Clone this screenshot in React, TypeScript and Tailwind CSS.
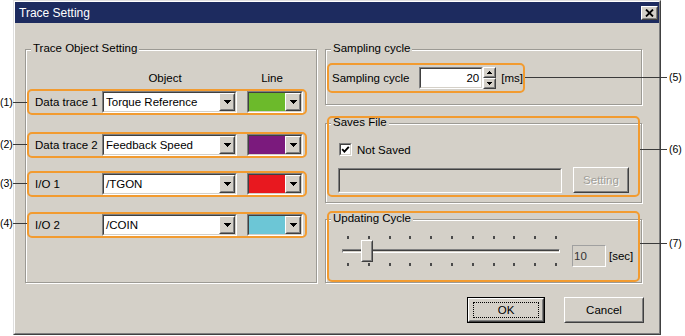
import React from "react";

type P = { className?: string; children?: React.ReactNode };

function Raised({ className = "", children }: P) {
  return (
    <div className={`border border-t-white border-l-white border-b-[#404040] border-r-[#404040] ${className}`}>
      <div className="flex h-full w-full items-center justify-center border border-t-[#d4d0c8] border-l-[#d4d0c8] border-b-[#808080] border-r-[#808080] bg-[#d4d0c8]">
        {children}
      </div>
    </div>
  );
}

function Sunken({ className = "", inner = "", children }: P & { inner?: string }) {
  return (
    <div className={`border border-t-[#808080] border-l-[#808080] border-b-white border-r-white ${className}`}>
      <div className={`h-full w-full border border-t-[#404040] border-l-[#404040] border-b-[#d4d0c8] border-r-[#d4d0c8] ${inner}`}>
        {children}
      </div>
    </div>
  );
}

function DownArrow() {
  return (
    <svg width="7" height="4" viewBox="0 0 7 4" shapeRendering="crispEdges">
      <path d="M0 0h7v1H0zM1 1h5v1H1zM2 2h3v1H2zM3 3h1v1H3z" fill="#000" />
    </svg>
  );
}

function UpSmall() {
  return (
    <svg width="5" height="3" viewBox="0 0 5 3" shapeRendering="crispEdges">
      <path d="M2 0h1v1H2zM1 1h3v1H1zM0 2h5v1H0z" fill="#000" />
    </svg>
  );
}
function DownSmall() {
  return (
    <svg width="5" height="3" viewBox="0 0 5 3" shapeRendering="crispEdges">
      <path d="M0 0h5v1H0zM1 1h3v1H1zM2 2h1v1H2z" fill="#000" />
    </svg>
  );
}

function Combo({ text }: { text: string }) {
  return (
    <Sunken className="h-[22px] w-[135px]" inner="flex bg-white">
      <span className="flex-1 pl-[2px] leading-[18px] text-black">{text}</span>
      <Raised className="h-[18px] w-[16px]">
        <DownArrow />
      </Raised>
    </Sunken>
  );
}

function ColorCombo({ color }: { color: string }) {
  return (
    <Sunken className="ml-[10px] h-[22px] w-[56px]" inner="flex bg-white">
      <div className="flex-1" style={{ backgroundColor: color }} />
      <Raised className="h-[18px] w-[16px]">
        <DownArrow />
      </Raised>
    </Sunken>
  );
}

function Group({ title, className = "", children }: P & { title: string }) {
  return (
    <div
      className={`relative border border-[#9c9a94] shadow-[inset_1px_1px_0_#fff,1px_1px_0_#fff] ${className}`}
    >
      <span className="absolute -top-[8px] left-[5px] bg-[#d4d0c8] px-[2px] leading-[13px]">{title}</span>
      {children}
    </div>
  );
}

function TraceRow({ label, value, color, className = "" }: { label: string; value: string; color: string; className?: string }) {
  return (
    <div className={`flex h-[26px] w-[280px] items-center rounded-[5px] border-2 border-[#f29b30] pl-[6px] ${className}`}>
      <span className="w-[67px] leading-[14px]">{label}</span>
      <Combo text={value} />
      <ColorCombo color={color} />
    </div>
  );
}

function Ticks() {
  return (
    <div className="flex h-[3px] justify-between pl-[5px] pr-[3px]">
      {Array.from({ length: 11 }).map((_, i) => (
        <div key={i} className="h-[3px] w-[2px] bg-[#4a4a4a]" />
      ))}
    </div>
  );
}

function Callout({ label, top, lineLeft, lineWidth, textLeft }: { label: string; top: number; lineLeft: number; lineWidth: number; textLeft: number }) {
  return (
    <>
      <div className="absolute h-[1px] bg-[#3a3a3a]" style={{ top, left: lineLeft, width: lineWidth }} />
      <span className="absolute text-[10.5px] leading-[14px] text-black" style={{ top: top - 7, left: textLeft }}>
        {label}
      </span>
    </>
  );
}

export default function App() {
  return (
    <div className="relative h-[336px] w-[685px] overflow-hidden bg-white text-[11.5px] text-black [font-family:'Liberation_Sans',Arial,sans-serif]">
      {/* window */}
      <div className="ml-[13px] h-[335px] w-[648px] border border-t-[#dfdfdf] border-l-[#dfdfdf] border-b-[#404040] border-r-[#404040]">
        <div className="h-full w-full border border-t-white border-l-white border-b-[#808080] border-r-[#808080] bg-[#d4d0c8]">
          {/* title bar */}
          <div className="flex h-[21px] items-center justify-between bg-[#1d2b5f] pl-[4px] pr-[1px]">
            <span className="text-[12px] leading-[14px] text-white">Trace Setting</span>
            <Raised className="h-[14px] w-[17px]">
              <svg width="9" height="8" viewBox="0 0 9 8">
                <path d="M1 0.5L8 7.5M8 0.5L1 7.5" stroke="#000" strokeWidth="1.8" />
              </svg>
            </Raised>
          </div>

          {/* body */}
          <div className="flex flex-col pl-[10px] pt-[26px]">
            <div className="flex gap-[8px]">
              {/* left group */}
              <Group title="Trace Object Setting" className="h-[234px] w-[292px] pl-[1px] pt-[21px]">
                <div className="flex h-[14px] leading-[14px]">
                  <div className="ml-[113px] w-[50px] text-center">Object</div>
                  <div className="ml-[57px] w-[50px] text-center">Line</div>
                </div>
                <TraceRow className="mt-[4px]" label="Data trace 1" value="Torque Reference" color="#6cba2b" />
                <TraceRow className="mt-[17px]" label="Data trace 2" value="Feedback Speed" color="#7b1a7d" />
                <TraceRow className="mt-[13px]" label="I/O 1" value="/TGON" color="#e8181f" />
                <TraceRow className="mt-[15px]" label="I/O 2" value="/COIN" color="#6cc6d6" />
              </Group>

              {/* right column */}
              <div className="flex w-[317px] flex-col">
                <Group title="Sampling cycle" className="h-[56px] pl-[1px] pt-[13px]">
                  <div className="flex h-[30px] w-[198px] items-center rounded-[5px] border-2 border-[#f29b30] pl-[3px]">
                    <span className="w-[88px] leading-[14px]">Sampling cycle</span>
                    <Sunken className="h-[22px] w-[65px]" inner="flex items-center justify-end bg-white pr-[2px]">
                      <span className="leading-[14px]">20</span>
                    </Sunken>
                    <div className="flex h-[22px] w-[13px] flex-col">
                      <Raised className="h-[11px] w-[13px]">
                        <UpSmall />
                      </Raised>
                      <Raised className="h-[11px] w-[13px]">
                        <DownSmall />
                      </Raised>
                    </div>
                    <span className="ml-[5px] leading-[14px]">[ms]</span>
                  </div>
                </Group>

                <Group title="Saves File" className="mt-[18px] h-[80px] pl-[12px] pt-[19px]">
                  <div className="flex h-[13px] items-center">
                    <Sunken className="ml-[1px] h-[13px] w-[13px]" inner="flex items-center justify-center bg-white">
                      <svg width="9" height="9" viewBox="0 0 9 9">
                        <path d="M1.2 4.2L3.4 6.6L7.8 1.8" stroke="#000" strokeWidth="1.9" fill="none" />
                      </svg>
                    </Sunken>
                    <span className="ml-[5px] leading-[14px]">Not Saved</span>
                  </div>
                  <div className="mt-[11px] flex items-end">
                    <Sunken className="h-[25px] w-[224px]" inner="bg-[#d4d0c8]" />
                    <Raised className="ml-[11px] h-[26px] w-[56px]">
                      <span className="leading-[14px] text-[#a09e98] [text-shadow:1px_1px_0_#fff]">Setting</span>
                    </Raised>
                  </div>
                  <div className="pointer-events-none absolute -top-[8px] left-[1px] h-[81px] w-[313px] rounded-[5px] border-2 border-[#f29b30]" />
                </Group>

                <Group title="Updating Cycle" className="mt-[16px] h-[64px] pl-[16px] pt-[16px]">
                  <div className="flex items-start">
                    <div className="relative h-[31px] w-[218px]">
                      <Ticks />
                      <div className="mt-[10px] h-[4px] border border-t-[#808080] border-l-[#808080] border-b-white border-r-white">
                        <div className="h-full w-full border-t border-t-[#404040]" />
                      </div>
                      <div className="mt-[10px]">
                        <Ticks />
                      </div>
                      <Raised className="absolute left-[19px] top-[4px] h-[22px] w-[12px]" />
                    </div>
                    <div className="ml-[12px] mt-[9px] flex h-[22px] w-[34px] items-center border border-t-[#a0a0a0] border-l-[#a0a0a0] border-b-white border-r-white pl-[1px]">
                      <span className="leading-[14px] text-[#333]">10</span>
                    </div>
                    <span className="ml-[3px] mt-[13px] leading-[14px]">[sec]</span>
                  </div>
                  <div className="pointer-events-none absolute -top-[9px] left-[1px] h-[71px] w-[313px] rounded-[5px] border-2 border-[#f29b30]" />
                </Group>
              </div>
            </div>

            {/* buttons */}
            <div className="mt-[14px] flex justify-end gap-[19px] pr-[15px]">
              <div className="h-[26px] w-[78px] border border-black">
                <Raised className="h-full w-full">
                  <div className="flex h-[16px] w-[66px] items-center justify-center border border-dotted border-black">
                    <span className="leading-[14px]">OK</span>
                  </div>
                </Raised>
              </div>
              <Raised className="h-[26px] w-[80px]">
                <span className="leading-[14px]">Cancel</span>
              </Raised>
            </div>
          </div>
        </div>
      </div>

      {/* callouts */}
      <Callout label="(1)" top={102} lineLeft={13} lineWidth={14} textLeft={0} />
      <Callout label="(2)" top={144} lineLeft={13} lineWidth={14} textLeft={0} />
      <Callout label="(3)" top={183} lineLeft={13} lineWidth={14} textLeft={0} />
      <Callout label="(4)" top={223} lineLeft={13} lineWidth={14} textLeft={0} />
      <Callout label="(5)" top={77} lineLeft={525} lineWidth={142} textLeft={669} />
      <Callout label="(6)" top={149} lineLeft={640} lineWidth={27} textLeft={669} />
      <Callout label="(7)" top={243} lineLeft={640} lineWidth={27} textLeft={669} />
    </div>
  );
}
